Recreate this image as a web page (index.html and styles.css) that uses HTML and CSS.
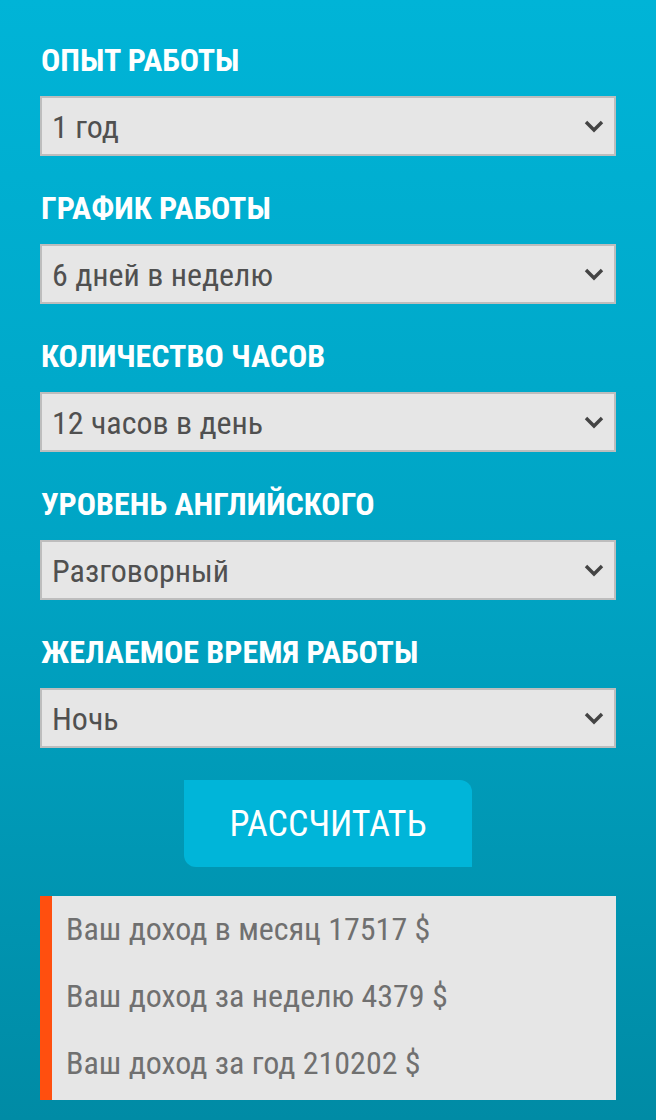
FILE: index.html
```html
<!DOCTYPE html>
<html lang="ru">
<head>
<meta charset="utf-8">
<link rel="stylesheet" href="styles.css">
</head>
<body>
<div class="calc">
  <div class="field">
    <div class="label">ОПЫТ РАБОТЫ</div>
    <div class="select"><span>1 год</span><svg class="chev" viewBox="0 0 20 14" width="20" height="14"><path d="M2 3 L10 11 L18 3" fill="none" stroke="#444" stroke-width="3.4"/></svg></div>
  </div>
  <div class="field">
    <div class="label">ГРАФИК РАБОТЫ</div>
    <div class="select"><span>6 дней в неделю</span><svg class="chev" viewBox="0 0 20 14" width="20" height="14"><path d="M2 3 L10 11 L18 3" fill="none" stroke="#444" stroke-width="3.4"/></svg></div>
  </div>
  <div class="field">
    <div class="label">КОЛИЧЕСТВО ЧАСОВ</div>
    <div class="select"><span>12 часов в день</span><svg class="chev" viewBox="0 0 20 14" width="20" height="14"><path d="M2 3 L10 11 L18 3" fill="none" stroke="#444" stroke-width="3.4"/></svg></div>
  </div>
  <div class="field">
    <div class="label">УРОВЕНЬ АНГЛИЙСКОГО</div>
    <div class="select"><span>Разговорный</span><svg class="chev" viewBox="0 0 20 14" width="20" height="14"><path d="M2 3 L10 11 L18 3" fill="none" stroke="#444" stroke-width="3.4"/></svg></div>
  </div>
  <div class="field">
    <div class="label">ЖЕЛАЕМОЕ ВРЕМЯ РАБОТЫ</div>
    <div class="select"><span>Ночь</span><svg class="chev" viewBox="0 0 20 14" width="20" height="14"><path d="M2 3 L10 11 L18 3" fill="none" stroke="#444" stroke-width="3.4"/></svg></div>
  </div>
  <div class="btn-row"><div class="btn">РАССЧИТАТЬ</div></div>
  <div class="result">
    <div class="line">Ваш доход в месяц 17517 $</div>
    <div class="line">Ваш доход за неделю 4379 $</div>
    <div class="line">Ваш доход за год 210202 $</div>
  </div>
</div>
</body>
</html>
```
FILE: styles.css
```css
html, body {
  margin: 0;
  padding: 0;
}
body {
  width: 656px;
  height: 1120px;
  overflow: hidden;
  background: linear-gradient(180deg, #00b4d7 0%, #00a4c4 50%, #008ba5 100%);
  font-family: "Roboto Condensed", Roboto, "Liberation Sans", sans-serif;
  font-stretch: condensed;
}
.calc {
  padding: 40px 40px 0 40px;
  display: flex;
  flex-direction: column;
}
.field {
  display: flex;
  flex-direction: column;
  margin-bottom: 32px;
}
.label {
  color: #fff;
  font-weight: 700;
  font-size: 32px;
  line-height: 40px;
  margin-bottom: 16px;
  padding-left: 1px;
}
.select {
  box-sizing: border-box;
  height: 60px;
  border: 2px solid #bdbdbd;
  background: #e6e6e6;
  display: flex;
  align-items: center;
  justify-content: space-between;
  padding: 0 10px 0 10px;
  color: #505050;
  font-size: 32px;
  font-weight: 400;
}
.select span { padding-top: 2px; }
.btn-row {
  display: flex;
  justify-content: center;
}
.btn {
  width: 288px;
  height: 87px;
  background: #00b5d9;
  color: #fff;
  font-size: 36px;
  display: flex;
  align-items: center;
  justify-content: center;
  border-radius: 0 12px 0 12px;
}
.result {
  margin-top: 29px;
  height: 204px;
  box-sizing: border-box;
  background: #e6e6e6;
  border-left: 12px solid #ff4f0f;
  padding: 0 0 0 14px;
}
.line {
  color: #707070;
  font-size: 32px;
  font-weight: 400;
  line-height: 67px;
  height: 67px;
}
```
